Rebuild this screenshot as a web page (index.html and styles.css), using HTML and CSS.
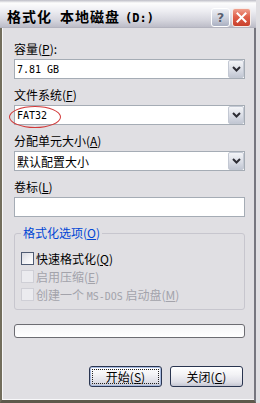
FILE: index.html
```html
<!DOCTYPE html>
<html lang="zh-CN">
<head>
  <meta charset="UTF-8" />
  <title>格式化 本地磁盘 (D:)</title>
  <link rel="stylesheet" href="styles.css">
</head>
<body>

<div class="window">
  <div class="titlebar">
    <div class="title">格式化<span class="t-drive">本地磁盘</span><span class="t-letter">(D:)</span></div>
    <div class="caption-btns">
      <span class="cbtn help">?</span>
      <span class="cbtn close">
        <svg width="11" height="11" viewBox="0 0 11 11"><path d="M1.5 1.5 L9.5 9.5 M9.5 1.5 L1.5 9.5" stroke="#fff" stroke-width="2" stroke-linecap="square" fill="none"/></svg>
      </span>
    </div>
  </div>

  <div class="frame">
    <div class="field">
      <div class="label">容量(<u>P</u>):</div>
      <div class="combo">
        <span class="value en">7.81 GB</span>
        <span class="drop"><svg width="9" height="6" viewBox="0 0 9 6"><path d="M1 1 L4.5 4.5 L8 1" stroke="#2d2d35" stroke-width="2" fill="none"/></svg></span>
      </div>
    </div>

    <div class="field">
      <div class="label">文件系统(<u>F</u>)</div>
      <div class="combo">
        <span class="value en">FAT32</span>
        <span class="drop"><svg width="9" height="6" viewBox="0 0 9 6"><path d="M1 1 L4.5 4.5 L8 1" stroke="#2d2d35" stroke-width="2" fill="none"/></svg></span>
        <span class="mark"></span>
      </div>
    </div>

    <div class="field">
      <div class="label">分配单元大小(<u>A</u>)</div>
      <div class="combo">
        <span class="value">默认配置大小</span>
        <span class="drop"><svg width="9" height="6" viewBox="0 0 9 6"><path d="M1 1 L4.5 4.5 L8 1" stroke="#2d2d35" stroke-width="2" fill="none"/></svg></span>
      </div>
    </div>

    <div class="field">
      <div class="label">卷标(<u>L</u>)</div>
      <div class="textbox"></div>
    </div>

    <fieldset class="group">
      <legend>格式化选项(<u>O</u>)</legend>
      <div class="check-row">
        <span class="checkbox"></span>
        <span>快速格式化(<u>Q</u>)</span>
      </div>
      <div class="check-row disabled">
        <span class="checkbox"></span>
        <span>启用压缩(<u>E</u>)</span>
      </div>
      <div class="check-row disabled">
        <span class="checkbox"></span>
        <span>创建一个 <span class="en">MS-DOS</span> 启动盘(<u>M</u>)</span>
      </div>
    </fieldset>

    <div class="progress"></div>

    <div class="actions">
      <button class="btn default">开始(<u>S</u>)</button>
      <button class="btn">关闭(<u>C</u>)</button>
    </div>
  </div>
</div>

</body>
</html>
```

FILE: styles.css
```css
body {
  margin: 0;
  background: #e0dfe3;
  font-family: "Noto Sans CJK SC", sans-serif;
  font-size: 12px;
  color: #000;
}

.en {
  font-family: "DejaVu Sans Mono", monospace;
  font-size: 10px;
}

.window {
  width: 256px;
  height: 403px;
  display: flex;
  flex-direction: column;
}

/* title bar */
.titlebar {
  height: 28px;
  flex: none;
  display: flex;
  align-items: center;
  justify-content: space-between;
  padding: 6px 5px 0 7px;
  box-sizing: border-box;
  background: linear-gradient(180deg, #bdbdc6 0, #fdfdfd 3px, #ededf2 11px, #d6d6de 20px, #bdbdc8 27px, #a9a9b4 28px);
}

.title {
  font-size: 14px;
  font-weight: bold;
  letter-spacing: 1px;
  line-height: 18px;
}

.t-drive {
  margin-left: 8px;
}

.t-letter {
  margin-left: 5px;
  font-family: "DejaVu Sans Mono", monospace;
  font-size: 12px;
  letter-spacing: 0;
}

.caption-btns {
  display: flex;
  gap: 2px;
}

.cbtn {
  width: 19px;
  height: 19px;
  box-sizing: border-box;
  border: 1px solid #fff;
  border-radius: 3px;
  display: flex;
  align-items: center;
  justify-content: center;
}

.help {
  background: linear-gradient(180deg, #eef0f5 0, #cfd3de 50%, #aab0c2 100%);
  color: #5a6070;
  font-family: "DejaVu Sans", sans-serif;
  font-weight: bold;
  font-size: 13px;
  text-shadow: 0 0 1px #fff;
}

.close {
  background: linear-gradient(180deg, #f0a08e 0, #e0604a 45%, #c8402c 100%);
  border-color: #f6ece8;
}

/* body */
.frame {
  flex: 1;
  background: #e0dfe3;
  border-left: 2px solid #726d5c;
  border-right: 2px solid #76767f;
  border-bottom: 3px solid #5d594b;
  padding: 13px 9px 0 12px;
  box-shadow: inset 1px -1px 0 #f8f8fa;
}

.field {
  margin-bottom: 8px;
}

.label {
  height: 16px;
  line-height: 16px;
  margin-bottom: 2px;
}

.combo,
.textbox {
  position: relative;
  height: 20px;
  box-sizing: border-box;
  border: 1px solid #a5acb5;
  background: #fff;
  display: flex;
  align-items: center;
}

.combo .value {
  flex: 1;
  padding-left: 2px;
}

.drop {
  width: 16px;
  height: 18px;
  box-sizing: border-box;
  border: 1px solid #c3c8d3;
  border-radius: 2px;
  background: linear-gradient(180deg, #f4f5f8 0, #dcdfe7 50%, #c2c7d3 100%);
  display: flex;
  align-items: center;
  justify-content: center;
}

/* red hand-drawn ring around FAT32 */
.mark {
  position: absolute;
  left: -6px;
  top: 0;
  width: 50px;
  height: 20px;
  border: 1px solid #d23a3a;
  border-radius: 50%;
}

/* options group */
.group {
  margin: 9px 0 0;
  padding: 9px 6px 6px;
  border: 1px solid #c7c6ce;
  border-radius: 3px;
}

.group legend {
  padding: 0 2px;
  line-height: 14px;
  color: #0046d5;
}

.check-row {
  height: 18px;
  display: flex;
  align-items: center;
  gap: 2px;
}

.checkbox {
  width: 13px;
  height: 13px;
  box-sizing: border-box;
  border: 1px solid #4f5b72;
  background: linear-gradient(135deg, #d8d9e0 0, #f4f4f7 60%, #fff 100%);
}

.disabled {
  color: #a3a3ab;
}

.disabled .checkbox {
  border-color: #cfcfd6;
  background: #ebebef;
}

.progress {
  margin-top: 14px;
  height: 14px;
  box-sizing: border-box;
  border: 1px solid #6c6c72;
  border-radius: 3px;
  background: linear-gradient(180deg, #f4f4f6, #fff);
}

/* buttons */
.actions {
  margin-top: 28px;
  margin-right: 2px;
  display: flex;
  justify-content: flex-end;
  gap: 8px;
}

.btn {
  width: 73px;
  height: 21px;
  padding: 0;
  font-family: "Noto Sans CJK SC", sans-serif;
  font-size: 12px;
  color: #000;
  border: 1px solid #2a3550;
  border-radius: 3px;
  background: linear-gradient(180deg, #ffffff 0, #f2f2f5 40%, #dedee6 80%, #c4c6d2 100%);
}

.btn.default {
  box-shadow: inset 0 0 0 1px #a8bbe0;
  outline: 1px dotted #222;
  outline-offset: -4px;
}
```
